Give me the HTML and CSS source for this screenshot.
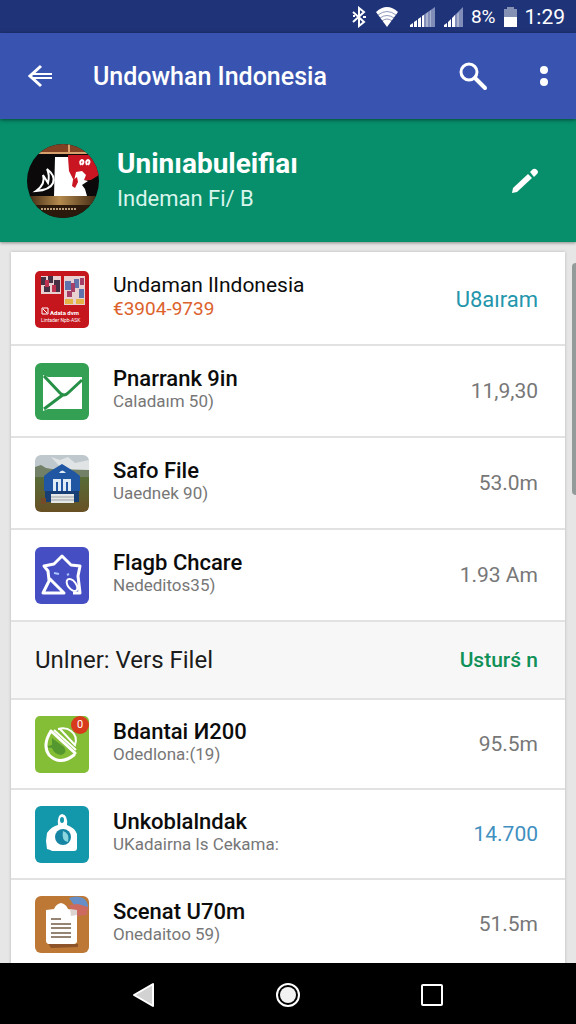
FILE: index.html
```html
<!DOCTYPE html>
<html lang="id">
<head>
    <meta charset="UTF-8">
    <meta name="viewport" content="width=device-width, initial-scale=1.0">
    <title>Undowhan Indonesia</title>
    <link rel="stylesheet" href="styles.css">
</head>
<body>

    <!-- Status bar -->
    <div class="status-bar">
        <svg width="14" height="22" viewBox="0 0 14 22" fill="none" stroke="#fff" stroke-width="2"><path d="M1 6l11 10-5 4V2l5 4L1 16"/><path d="M1 10h2M11 11h3"/></svg>
        <svg class="wifi" width="22" height="20" viewBox="0 0 22 20"><path fill="#fff" d="M0 5Q11-5 22 5L11 20z"/><path d="M2 8q9-7 18 0M4 11q7-5 14 0M6 14q5-4 10 0" fill="none" stroke="#1f3478" stroke-opacity=".5"/></svg>
        <svg class="signal" width="26" height="20" viewBox="0 0 26 20"><path fill="#7f8db8" d="M12 20V9L25 0v20z"/><path fill="#fff" d="M0 20v-2l3-2v4zM4 20v-5l3-2v7zM8 20v-8l3-2v10zM12 20V9l2-1v12z"/><path fill="#a9b3cf" d="M16 20V7l2-2v15zM20 20V4l1-1v17z"/></svg>
        <svg width="19" height="20" viewBox="0 0 19 20"><path fill="#7f8db8" d="M10 20V9l9-9v20z"/><path fill="#fff" d="M0 20v-2l3-2v4zM4 20v-5l3-3v8zM8 20v-9l3-3v12z"/><path fill="#a9b3cf" d="M13 20V7l2-2v15z"/></svg>
        <span class="battery-text">8%</span>
        <svg width="13" height="20" viewBox="0 0 13 20"><path fill="#8491b5" d="M3 0h7v2h3v9H0V2h3z"/><path fill="#fff" d="M0 10h13v10H0z"/></svg>
        <span class="time">1:29</span>
    </div>

    <!-- App bar -->
    <header class="app-bar">
        <button class="icon-button back" aria-label="Kembali">
            <svg width="26" height="24" viewBox="0 0 26 24" fill="none" stroke="#fff" stroke-width="2"><path d="M13 2L2 12l11 10" stroke-width="3"/><path d="M5 10h19M5 14h19"/></svg>
        </button>
        <h1>Undowhan Indonesia</h1>
        <button class="icon-button" aria-label="Cari">
            <svg width="30" height="30" viewBox="0 0 30 30" fill="none" stroke="#fff"><circle cx="11" cy="11" r="8" stroke-width="3"/><path d="M17 17l10 10" stroke-width="4" stroke-linecap="round"/></svg>
        </button>
        <button class="icon-button more" aria-label="Menu">
            <svg width="8" height="22" viewBox="0 0 8 22" fill="#fff"><circle cx="4" cy="5" r="4"/><circle cx="4" cy="17" r="4"/></svg>
        </button>
    </header>

    <!-- Profile -->
    <section class="profile">
        <svg class="avatar" width="72" height="74" viewBox="0 0 72 74">
            <defs>
                <clipPath id="avatarClip"><ellipse cx="36" cy="37" rx="36" ry="37"/></clipPath>
                <linearGradient id="wood" x1="0" x2="1"><stop offset="0" stop-color="#3c2510"/><stop offset=".45" stop-color="#b58b4e"/><stop offset="1" stop-color="#3a2410"/></linearGradient>
            </defs>
            <g clip-path="url(#avatarClip)">
                <path fill="#0b0909" d="M0 0h72v74H0z"/>
                <path fill="#814224" d="M10 0h52v8H10z"/>
                <path fill="#d8a06c" d="M12 8h48v2H12zM41 0h2v8h-2z"/>
                <path fill="#c91522" d="M41 11h31v20l-8 5-12 1-11 3z"/>
                <path fill="#fff" d="M28 13h13l1 14 5 10 2-9 6-1 4 4-2 5 4 1-6 4 3 4 2 7H27z"/>
                <path fill="#c91522" d="M46 36l4-3 1 5-3 6-3-2z"/>
                <path d="M54 21q-2-4 1-5 3 1 0 5M60 21q-2-4 1-5 3 1 0 5" fill="none" stroke="#fff" stroke-width="2"/>
                <path d="M9 47q14-1 17-8 3-7-6-14 3 6 1 14l-5-8q3 9-7 16z" fill="none" stroke="#fff" stroke-width="2"/>
                <path fill="url(#wood)" d="M0 52h72v9H0z"/>
                <path fill="#2b190b" d="M0 61h72v13H0z"/>
                <path stroke="#bba27c" stroke-width="2" stroke-dasharray="2 1" d="M14 65h35"/>
            </g>
        </svg>
        <div class="profile-text">
            <h2>Uninıabuleifiaı</h2>
            <p>Indeman Fi/ B</p>
        </div>
        <button class="icon-button edit" aria-label="Ubah">
            <svg width="26" height="26" viewBox="0 0 26 26" fill="#fff"><path d="M0 25l1-5L16 6l4 4L5 24z"/><path d="M18 4l3-3q2-1 4 1t0 4l-3 3z"/></svg>
        </button>
    </section>

    <!-- Content -->
    <main class="content">
        <div class="card">
            <ul class="file-list">
                <li class="featured">
                    <svg class="app-icon" viewBox="0 0 54 57">
                        <rect width="54" height="57" rx="5" fill="#c5161d"/>
                        <path fill="#e8cfd0" d="M6 5h20v18H6zM29 5h21v29H29z"/>
                        <path fill="#463044" d="M6 6h5v8H6zM13 5h5v7h-5zM19 9h6v12h-6zM9 15h6v6H9z"/>
                        <path fill="#bc3150" d="M10 9h4v7h-4zM17 14h4v7h-4z"/>
                        <path fill="#6173ad" d="M30 10h6v9h-6zM39 8h5v9h-5zM44 18h5v9h-5z"/>
                        <path fill="#a53f68" d="M36 12h4v9h-4zM32 20h5v6h-5zM45 7h4v7h-4z"/>
                        <path fill="#e4b546" d="M30 28h8v5h-8zM41 28h8v5h-8z"/>
                        <path d="M7 37h6v6H7zM8 38l4 4" fill="none" stroke="#fff"/>
                        <text x="15" y="44" class="tiny-title">Adata dvm</text>
                        <text x="6" y="51" class="tiny-text">Lintader Npb-ASK</text>
                    </svg>
                    <div class="file-text"><h3>Undaman lIndonesia</h3><p>€3904-9739</p></div>
                    <button class="value teal">U8aıram</button>
                </li>
                <li>
                    <svg class="app-icon" viewBox="0 0 54 57">
                        <rect width="54" height="57" rx="6" fill="#34a053"/>
                        <path fill="#fff" d="M8 12l5 2h34v32H13l-5 2z"/>
                        <path d="M9 13l16 17q4 4 8 0l14-13M9 46l20-15" fill="none" stroke="#269047" stroke-width="3"/>
                    </svg>
                    <div class="file-text"><h3>Pnarrank 9in</h3><p>Caladaım 50)</p></div>
                    <span class="value">11,9,30</span>
                </li>
                <li>
                    <svg class="app-icon" viewBox="0 0 54 57">
                        <defs>
                            <clipPath id="photoClip"><rect width="54" height="57" rx="6"/></clipPath>
                            <linearGradient id="field" x2="0" y2="1"><stop offset="0" stop-color="#586c38"/><stop offset="1" stop-color="#675024"/></linearGradient>
                        </defs>
                        <g clip-path="url(#photoClip)">
                            <path fill="#bfc8cd" d="M0 0h54v20H0z"/>
                            <path fill="#e1e4e5" d="M16 2l9 3 8-3 7 6 14-3v10H28z"/>
                            <path fill="#718066" d="M0 12l6-2 5 3 6 1 37 1v12H0z"/>
                            <path fill="url(#field)" d="M0 22h54v35H0z"/>
                            <path fill="#173e75" d="M10 33h34v14H10z"/>
                            <path fill="#2056a2" d="M9 21l5-4 13-8 13 8 5 4v15H9z"/>
                            <path fill="#dfebf5" d="M24 18q3-5 7 0zM18 24h8v12h-8zM28 24h8v12h-8z"/>
                            <path fill="#2056a2" d="M21 27h2v9h-2zM31 27h2v9h-2z"/>
                            <path fill="#e5e8e8" d="M16 39h23v9H16z"/>
                            <path stroke="#9ba1a2" d="M16 42h23M16 45h23"/>
                            <path fill="#754a29" d="M6 43h5v6H6z"/>
                        </g>
                    </svg>
                    <div class="file-text"><h3>Safo File</h3><p>Uaednek 90)</p></div>
                    <span class="value">53.0m</span>
                </li>
                <li>
                    <svg class="app-icon" viewBox="0 0 54 57">
                        <rect width="54" height="57" rx="6" fill="#454fc3"/>
                        <path d="M15 32l-7 14h21z" fill="none" stroke="#fff" stroke-width="3" stroke-linejoin="round"/>
                        <path d="M14 33l-1-9-4-5 10-2 8-8 9 9 9 1-2 10 2 17h-7" fill="none" stroke="#fff" stroke-width="3" stroke-linejoin="round"/>
                        <ellipse cx="37" cy="38" rx="4" ry="7" transform="rotate(-38 37 38)" fill="none" stroke="#fff" stroke-width="2"/>
                        <path d="M19 26l5 1M32 28l2-1" stroke="#a9c4ff" stroke-width="2"/>
                    </svg>
                    <div class="file-text"><h3>Flagb Chcare</h3><p>Nededitos35)</p></div>
                    <span class="value">1.93 Am</span>
                </li>
            </ul>

            <div class="section-header">
                <h2>Unlner: Vers Filel</h2>
                <button class="value green">Usturś n</button>
            </div>

            <ul class="file-list compact">
                <li>
                    <div class="icon-wrap">
                        <svg class="app-icon" viewBox="0 0 54 57">
                            <rect width="54" height="57" rx="5" fill="#84bd36"/>
                            <path fill="#41882c" opacity=".7" d="M17 22l12 9q4 6-3 8-7-1-9-7l-8-1 8-2z"/>
                            <path d="M16 15q-9 14-2 24 11 11 25 0M16 15l24 22" fill="none" stroke="#fff" stroke-width="3" stroke-linecap="round"/>
                            <path d="M19 14l22 20M25 13l15 16q3-9-4-14-5-4-13-2" fill="none" stroke="#fff" stroke-width="2"/>
                        </svg>
                        <span class="badge">0</span>
                    </div>
                    <div class="file-text"><h3>Bdantai И200</h3><p>Odedlona:(19)</p></div>
                    <span class="value">95.5m</span>
                </li>
                <li>
                    <svg class="app-icon" viewBox="0 0 54 57">
                        <rect width="54" height="57" rx="6" fill="#1397aa"/>
                        <path fill="#fff" d="M23 19q-1-10 4-11 6 1 5 11 8 3 10 9v14q0 3-3 3H17q-1-1-5-2l-1-8 1-8q5-7 11-8z"/>
                        <ellipse cx="27" cy="14" rx="2" ry="3" fill="#1397aa"/>
                        <circle cx="28" cy="31" r="8" fill="#1685a3"/>
                        <path fill="#8bd6df" d="M28 25q7 2 5 11-7-1-5-11z"/>
                    </svg>
                    <div class="file-text"><h3>Unkoblalndak</h3><p>UKadairna ls Cekama:</p></div>
                    <span class="value blue">14.700</span>
                </li>
                <li>
                    <svg class="app-icon" viewBox="0 0 54 57">
                        <rect width="54" height="57" rx="6" fill="#bd7836"/>
                        <path fill="#8d5429" d="M12 46l31 2v3l-27 1z"/>
                        <path fill="#668fc7" d="M34 2q8-3 14 0 6 4 5 11l-12-1z"/>
                        <path fill="#cd6a60" d="M33 9l10-1 10 3-1 8-10 1z"/>
                        <path fill="#fff" d="M11 14l8-1q2-5 7-6 5 1 7 6l9 2v31q-1 2-3 2H13q-2-1-2-3z"/>
                        <path fill="#ddd4d1" d="M35 13l7 1v5l-6 1z"/>
                        <path d="M16 23h10M16 28h20M16 32h20M16 37h20M16 41h20" stroke="#958471" stroke-width="2"/>
                    </svg>
                    <div class="file-text"><h3>Scenat U70m</h3><p>Onedaitoo 59)</p></div>
                    <span class="value">51.5m</span>
                </li>
            </ul>
        </div>
        <div class="scroll-thumb"></div>
    </main>

    <!-- Navigation bar -->
    <nav class="nav-bar">
        <button class="icon-button" aria-label="Kembali">
            <svg width="26" height="26" viewBox="0 0 26 26"><path d="M3 14L22 3v22z" fill="#d2d2d2" stroke="#fff" stroke-width="2" stroke-linejoin="round"/></svg>
        </button>
        <button class="icon-button" aria-label="Beranda">
            <svg width="26" height="26" viewBox="0 0 26 26"><circle cx="13" cy="14" r="11" fill="none" stroke="#fff" stroke-width="2"/><circle cx="13" cy="14" r="8" fill="#f2f2f2"/></svg>
        </button>
        <button class="icon-button" aria-label="Aplikasi terbaru">
            <svg width="26" height="26" viewBox="0 0 26 26"><rect x="3" y="4" width="20" height="20" rx="1" fill="none" stroke="#fff" stroke-width="2"/></svg>
        </button>
    </nav>

</body>
</html>
```
FILE: styles.css
```css
* {
    box-sizing: border-box;
}

body {
    font-family: Roboto, Arial, sans-serif;
    display: flex;
    flex-direction: column;
    height: 100vh;
    margin: 0;
    overflow: hidden;
    background-color: #e6e6e6;
}

h1, h2, h3, p, ul {
    margin: 0;
    padding: 0;
}

button {
    font-family: inherit;
    padding: 0;
    border: none;
    background: none;
    cursor: pointer;
}

svg {
    display: block;
    flex-shrink: 0;
}

/* Status bar */
.status-bar {
    display: flex;
    align-items: center;
    justify-content: flex-end;
    gap: 8px;
    flex-shrink: 0;
    height: 33px;
    padding-right: 11px;
    background-color: #1f3478;
    color: #fff;
}

.wifi {
    margin-left: 2px;
}

.signal {
    margin-left: 4px;
}

.battery-text {
    font-size: 19px;
}

.time {
    font-size: 21px;
}

/* App bar */
.app-bar {
    display: flex;
    align-items: center;
    flex-shrink: 0;
    height: 86px;
    padding: 0 28px;
    background-color: #3954b0;
    color: #fff;
    box-shadow: 0 1px 4px rgba(0, 0, 0, 0.5);
    position: relative;
    z-index: 1;
}

.app-bar h1 {
    flex: 1;
    margin-left: 39px;
    font-size: 25px;
    font-weight: 500;
}

.icon-button {
    display: flex;
    align-items: center;
    justify-content: center;
}

.more {
    margin-left: 52px;
}

/* Profile */
.profile {
    display: flex;
    align-items: center;
    flex-shrink: 0;
    height: 123px;
    padding: 0 38px 0 27px;
    background-color: #078f6c;
    color: #fff;
    box-shadow: 0 1px 3px rgba(0, 0, 0, 0.4);
    position: relative;
}

.profile-text {
    flex: 1;
    margin-left: 18px;
}

.profile-text h2 {
    font-size: 28px;
    line-height: 36px;
    font-weight: 700;
}

.profile-text p {
    font-size: 22px;
    line-height: 34px;
    color: #d9f5ec;
}

/* Content */
.content {
    flex: 1;
    min-height: 0;
    padding: 10px 11px 0;
    overflow: hidden;
    position: relative;
}

.card {
    background-color: #fff;
    box-shadow: 0 0 3px rgba(0, 0, 0, 0.2);
}

.file-list {
    list-style: none;
    padding-top: 2px;
}

.file-list li {
    display: flex;
    align-items: center;
    height: 92px;
    padding: 0 27px 0 24px;
    border-bottom: 2px solid #e2e2e2;
}

.compact {
    padding-top: 0;
}

.compact li {
    height: 90px;
}

.app-icon {
    width: 54px;
    height: 57px;
}

.icon-wrap {
    position: relative;
}

.badge {
    position: absolute;
    top: 0;
    right: 0;
    width: 18px;
    height: 18px;
    border-radius: 50%;
    background-color: #d83a1c;
    color: #fff;
    font-size: 11px;
    line-height: 18px;
    text-align: center;
}

.tiny-title {
    font-size: 6px;
    font-weight: 700;
    fill: #fff;
}

.tiny-text {
    font-size: 5px;
    fill: #fff;
}

.file-text {
    flex: 1;
    margin-left: 24px;
    padding-bottom: 4px;
}

.file-text h3 {
    font-size: 22px;
    line-height: 24px;
    font-weight: 500;
    color: #0c0c0c;
}

.file-text p {
    font-size: 17px;
    line-height: 20px;
    color: #777;
}

.value {
    font-size: 21px;
    color: #777;
}

/* First row */
.featured .file-text h3 {
    font-size: 21px;
    font-weight: 400;
}

.featured .file-text p {
    font-size: 19px;
    line-height: 24px;
    color: #dc622c;
}

.teal {
    font-size: 22px;
    color: #2496ac;
}

.blue {
    color: #3f8fc0;
}

.green {
    color: #109158;
    font-weight: 500;
}

/* Section header */
.section-header {
    display: flex;
    align-items: center;
    justify-content: space-between;
    height: 78px;
    padding: 0 27px 0 24px;
    background-color: #f7f7f7;
    border-bottom: 2px solid #e2e2e2;
}

.section-header h2 {
    font-size: 24px;
    font-weight: 400;
    color: #1c1c1c;
}

/* Scrollbar */
.scroll-thumb {
    position: absolute;
    top: 21px;
    right: 0;
    width: 4px;
    height: 232px;
    border-radius: 4px 0 0 4px;
    background-color: #929a9a;
}

/* Navigation bar */
.nav-bar {
    display: flex;
    align-items: center;
    justify-content: center;
    gap: 118px;
    flex-shrink: 0;
    height: 61px;
    background-color: #000;
}
```
